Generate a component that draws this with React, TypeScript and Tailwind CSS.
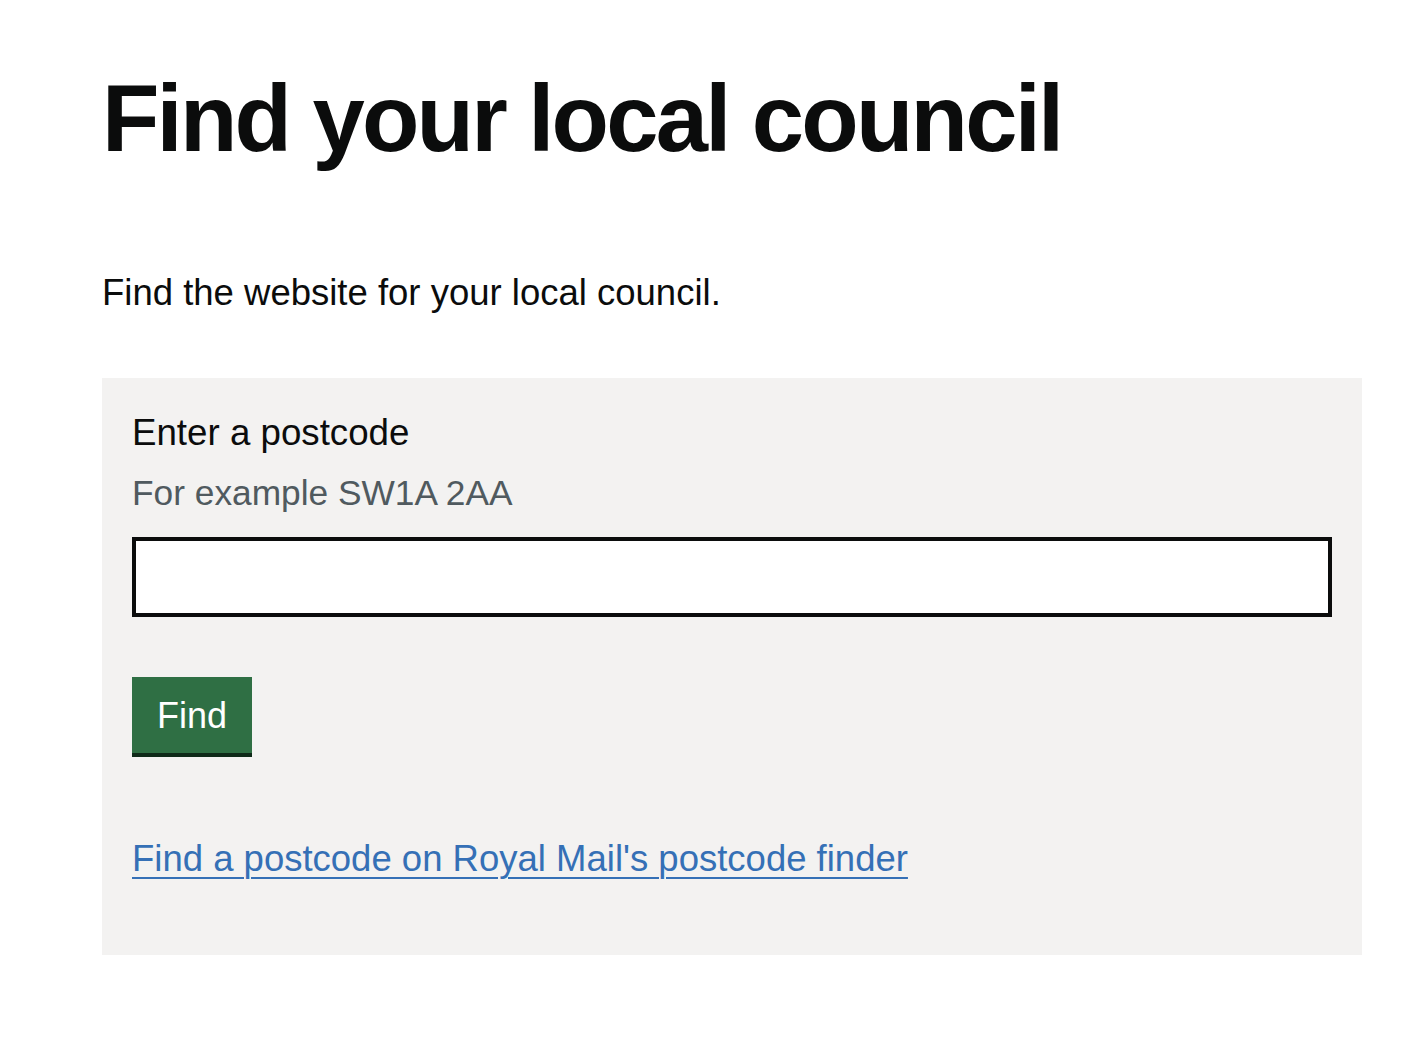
export default function App() {
  return (
    <div className="min-h-[1054px] bg-white font-['Liberation_Sans',Arial,sans-serif] text-[#0b0c0c]">
      <main className="pl-[102px] pr-[50px] pt-[72px]">
        <h1 className="text-[94px] font-bold leading-[94px] tracking-[-2.8px]">Find your local council</h1>
        <p className="mt-[103px] text-[36.5px] leading-[48px]">Find the website for your local council.</p>

        <form className="mt-[61px] w-[1260px] bg-[#f3f2f1] px-[30px] pt-[31px] pb-[72px]" onSubmit={(e) => e.preventDefault()}>
          <label htmlFor="postcode" className="block text-[36.7px] leading-[48px]">
            Enter a postcode
          </label>
          <div id="postcode-hint" className="mt-[12px] text-[35.3px] leading-[48px] text-[#505a5f]">
            For example SW1A 2AA
          </div>
          <input
            id="postcode"
            aria-describedby="postcode-hint"
            className="mt-[20px] block h-[80px] w-full border-4 border-[#0b0c0c] bg-white px-3 text-[36px] focus:outline-none"
            type="text"
          />
          <button
            type="submit"
            className="mt-[60px] block h-[76px] w-[120px] bg-[#2f6f44] pt-[1px] text-center text-[36px] leading-[48px] text-white shadow-[0_4px_0_#0f2a19]"
          >
            Find
          </button>
          <p className="mt-[82px] text-[36.5px] leading-[48px]">
            <a href="#" className="text-[#3570b6] underline decoration-2 underline-offset-[6px]">
              Find a postcode on Royal Mail's postcode finder
            </a>
          </p>
        </form>
      </main>
    </div>
  );
}
